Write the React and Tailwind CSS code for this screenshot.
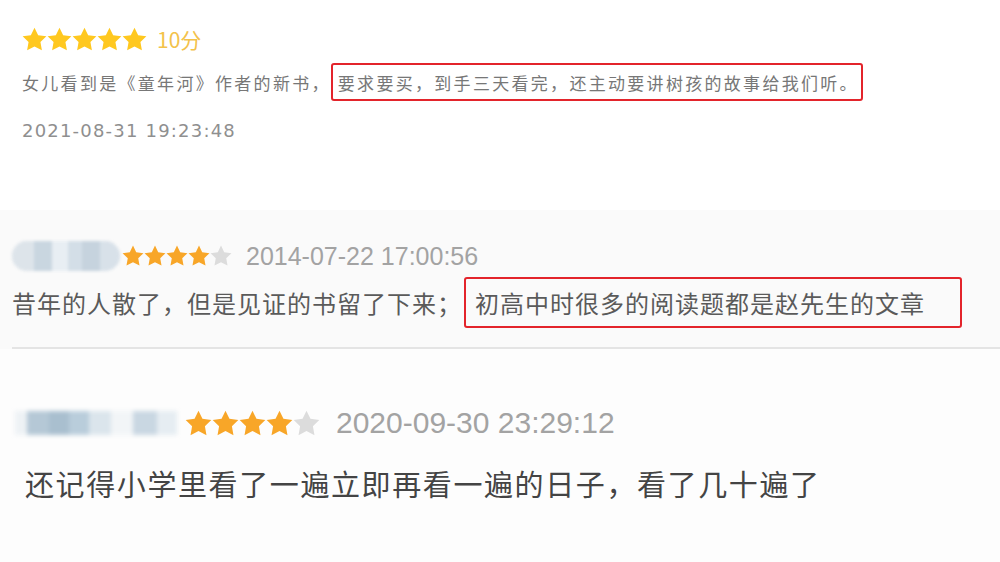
const STAR = "M12 0.6l3.5 7.2 7.9 1.1-5.7 5.6 1.4 7.9L12 18.7l-7.1 3.7 1.4-7.9L0.6 8.9l7.9-1.1z";

const Stars = ({ count, filled, size, color, empty = "#d9d9d9", gap = 0 }) => (
  <div className="flex items-center" style={{ gap }}>
    {Array.from({ length: count }).map((_, i) => (
      <svg key={i} width={size} height={size} viewBox="0 0 24 24">
        <path d={STAR} fill={i < filled ? color : empty} />
      </svg>
    ))}
  </div>
);

const cjk = "font-['Noto_Sans_CJK_SC',sans-serif]";

const App = () => {
  return (
    <div className="w-[1000px] h-[562px] overflow-hidden bg-white">
      {/* first review */}
      <div className="h-[210px] bg-white pl-[22px] pt-[27px]">
        <div className="flex items-center gap-[10px]">
          <Stars count={5} filled={5} size={25} color="#ffc81f" gap={-1} />
          <span className={`${cjk} text-[21px] text-[#f3c24a] leading-none`}>10分</span>
        </div>
        <div className={`flex items-center mt-[11px] ${cjk} text-[17px] tracking-[2.3px] text-[#777] leading-none`}>
          <span>女儿看到是《童年河》作者的新书，</span>
          <span className="border-2 border-[#e3242b] rounded-[3px] h-[38px] flex items-center pl-[5px] pr-[2px]">
            要求要买，到手三天看完，还主动要讲树孩的故事给我们听。
          </span>
        </div>
        <div className="mt-[21px] font-['DejaVu_Sans',sans-serif] text-[18px] tracking-[1.2px] text-[#8f8f8f] leading-none">
          2021-08-31 19:23:48
        </div>
      </div>

      {/* second review */}
      <div className="h-[137px] bg-[#fafafa] pt-[31px]">
        <div className="flex items-center pl-[12px]">
          <div className="relative w-[108px] h-[30px] rounded-full overflow-hidden bg-[#e3e9ef] blur-[1.5px]">
            <div className="flex h-full">
              <div className="w-[22px] bg-[#dde4ea]" />
              <div className="w-[18px] bg-[#c9d6e0]" />
              <div className="w-[16px] bg-[#e8eef3]" />
              <div className="w-[14px] bg-[#d3dee7]" />
              <div className="w-[18px] bg-[#c6d3de]" />
              <div className="w-[20px] bg-[#d8e1e9]" />
            </div>
          </div>
          <div className="ml-[2px]">
            <Stars count={5} filled={4} size={22} color="#f8a628" empty="#dcdcdc" gap={-1} />
          </div>
          <span className="ml-[14px] font-['Liberation_Sans',sans-serif] text-[25px] text-[#a3a3a3] leading-none">
            2014-07-22 17:00:56
          </span>
        </div>
        <div className={`flex items-center mt-[6px] pl-[12px] ${cjk} text-[24px] text-[#5a5a5a] leading-none tracking-[1px]`}>
          <span>昔年的人散了，但是见证的书留了下来；</span>
          <span className="ml-[2px] border-2 border-[#e3242b] rounded-[3px] h-[51px] w-[498px] flex items-center pl-[9px]">
            初高中时很多的阅读题都是赵先生的文章
          </span>
        </div>
      </div>
      <div className="pl-[12px] bg-[#fafafa]">
        <div className="h-[2px] bg-[#e4e4e4]" />
      </div>

      {/* third review */}
      <div className="h-[213px] bg-[#fdfdfd] pt-[57px]">
        <div className="flex items-center pl-[15px]">
          <div className="relative w-[165px] h-[34px] blur-[2px]">
            <div className="flex h-full items-center">
              <div className="w-[12px] h-[24px] bg-[#eef2f5]" />
              <div className="w-[22px] h-[24px] bg-[#b5c8d6]" />
              <div className="w-[20px] h-[24px] bg-[#a9bfcf]" />
              <div className="w-[20px] h-[24px] bg-[#b9cddb]" />
              <div className="w-[22px] h-[24px] bg-[#dbe5ec]" />
              <div className="w-[22px] h-[24px] bg-[#f2f5f7]" />
              <div className="w-[24px] h-[24px] bg-[#c9d7e2]" />
              <div className="w-[20px] h-[24px] bg-[#e6edf2]" />
            </div>
          </div>
          <div className="ml-[5px]">
            <Stars count={5} filled={4} size={27} color="#f8a628" empty="#dcdcdc" gap={-1} />
          </div>
          <span className="ml-[16px] font-['Liberation_Sans',sans-serif] text-[30px] text-[#a3a3a3] leading-none">
            2020-09-30 23:29:12
          </span>
        </div>
        <div className={`mt-[29px] pl-[25px] ${cjk} text-[29px] text-[#444] leading-none tracking-[1.6px]`}>
          还记得小学里看了一遍立即再看一遍的日子，看了几十遍了
        </div>
      </div>
    </div>
  );
};

export default App;
